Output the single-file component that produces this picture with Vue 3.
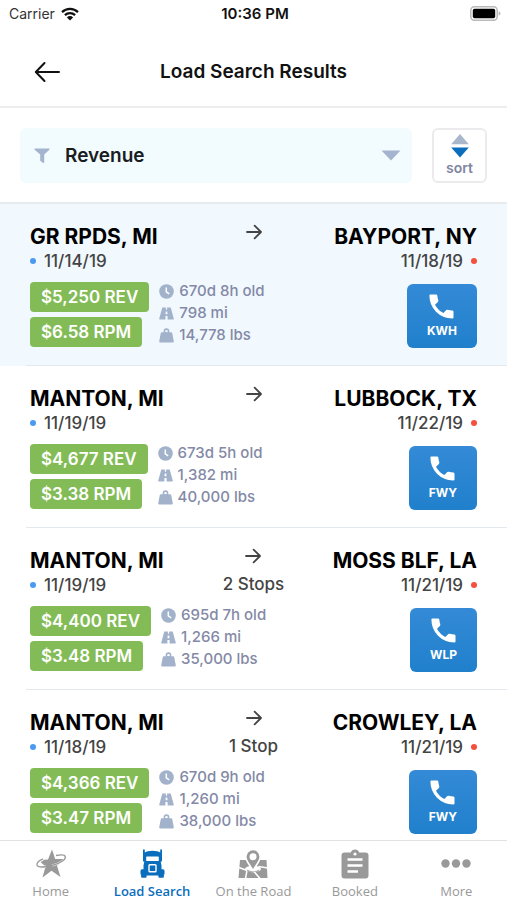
<script setup>
import { ref } from 'vue'

const sortKey = ref('Revenue')
const activeTab = ref('Load Search')

const loads = [
  { from: 'GR RPDS, MI', to: 'BAYPORT, NY', start: '11/14/19', end: '11/18/19', stops: '', rev: '$5,250 REV', rpm: '$6.58 RPM', age: '670d 8h old', miles: '798 mi', weight: '14,778 lbs', agent: 'KWH', selected: true },
  { from: 'MANTON, MI', to: 'LUBBOCK, TX', start: '11/19/19', end: '11/22/19', stops: '', rev: '$4,677 REV', rpm: '$3.38 RPM', age: '673d 5h old', miles: '1,382 mi', weight: '40,000 lbs', agent: 'FWY' },
  { from: 'MANTON, MI', to: 'MOSS BLF, LA', start: '11/19/19', end: '11/21/19', stops: '2 Stops', rev: '$4,400 REV', rpm: '$3.48 RPM', age: '695d 7h old', miles: '1,266 mi', weight: '35,000 lbs', agent: 'WLP' },
  { from: 'MANTON, MI', to: 'CROWLEY, LA', start: '11/18/19', end: '11/21/19', stops: '1 Stop', rev: '$4,366 REV', rpm: '$3.47 RPM', age: '670d 9h old', miles: '1,260 mi', weight: '38,000 lbs', agent: 'FWY' }
]

const tabs = ['Home', 'Load Search', 'On the Road', 'Booked', 'More']
</script>

<template>
  <div class="screen">
    <div class="status">
      <div class="carrier">
        <span>Carrier</span>
        <svg class="wifi" viewBox="0 0 18 14" aria-hidden="true">
          <path d="M1 5.2a11.5 11.5 0 0 1 16 0M3.9 8.2a7.4 7.4 0 0 1 10.2 0" fill="none" stroke="#111" stroke-width="2.3" />
          <path d="M9 13.6l-3.1-3.2a4.4 4.4 0 0 1 6.2 0z" fill="#111" />
        </svg>
      </div>
      <strong class="clock">10:36 PM</strong>
      <svg class="battery" viewBox="0 0 31 15" aria-hidden="true">
        <rect x="0.8" y="0.8" width="26.4" height="13.4" rx="3.6" fill="#fff" stroke="#b9b9b9" stroke-width="1.5" />
        <rect x="2.8" y="2.8" width="22.4" height="9.4" rx="1.8" fill="#000" />
        <path d="M28.6 5.2q1.9.8 1.9 2.3t-1.9 2.3z" fill="#b9b9b9" />
      </svg>
    </div>

    <header class="header">
      <button class="back" type="button" aria-label="Back">
        <svg viewBox="0 0 26 22" aria-hidden="true">
          <path d="M10.5 2L1.8 11l8.7 9M2 11h23" fill="none" stroke="#111" stroke-width="2" stroke-linecap="round" stroke-linejoin="round" />
        </svg>
      </button>
      <h1>Load Search Results</h1>
    </header>

    <div class="filters">
      <div class="picker">
        <select v-model="sortKey" aria-label="Sort loads by">
          <option>Revenue</option>
          <option>Rate per mile</option>
          <option>Distance</option>
        </select>
        <svg class="funnel" viewBox="0 0 16 16" aria-hidden="true">
          <path d="M.8.5h14.4q.8.5.2 1.300L10.200 6.500v7.900q-.5.9-1.300.4L6.200 12.800V6.500L.6 1.800Q.1 1 .8.5z" fill="#a5b4ce" />
        </svg>
        <svg class="caret" viewBox="0 0 20 11" aria-hidden="true"><path d="M.5.5h19L10 10.5z" fill="#a5b4ce" /></svg>
      </div>
      <button class="sort" type="button">
        <svg viewBox="0 0 18 24" aria-hidden="true">
          <path d="M9 0l8.800 10.200H.2z" fill="#a9b7cb" />
          <path d="M.2 13.400h17.600L9 23.600z" fill="#0a6ebd" />
        </svg>
        <span>sort</span>
      </button>
    </div>

    <main class="list">
      <article v-for="(load, i) in loads" :key="i" class="load" :class="{ selected: load.selected }">
        <div class="body">
          <div class="route">
            <div class="place">
              <h2>{{ load.from }}</h2>
              <p><i class="dot pickup"></i>{{ load.start }}</p>
            </div>
            <div class="via">
              <svg viewBox="0 0 16 16" aria-hidden="true">
                <path d="M1 8h13.600M8.600 1.600L15 8l-6.400 6.400" fill="none" stroke="#444" stroke-width="1.800" stroke-linecap="round" stroke-linejoin="round" />
              </svg>
              <span>{{ load.stops }}</span>
            </div>
            <div class="place end">
              <h2>{{ load.to }}</h2>
              <p>{{ load.end }}<i class="dot drop"></i></p>
            </div>
          </div>
          <div class="details">
            <div class="badges">
              <span class="badge">{{ load.rev }}</span>
              <span class="badge">{{ load.rpm }}</span>
            </div>
            <ul class="stats">
              <li>
                <svg viewBox="0 0 15 15" aria-hidden="true">
                  <circle cx="7.5" cy="7.5" r="7.3" fill="#a2b2cb" />
                  <path d="M7.3 3.4v4.4l2.9 2" fill="none" stroke="#fff" stroke-width="1.5" />
                </svg>{{ load.age }}
              </li>
              <li>
                <svg viewBox="0 0 15 15" aria-hidden="true">
                  <path d="M3.300 1.500h3.600v2.300h1.200V1.500h3.600l3.100 11.200q.1.800-.7.800H8.600V10H6.400v3.500H.9q-.8 0-.7-.8zM6.700 5.400l-.2 2.900h2l-.2-2.900z" fill="#a2b2cb" fill-rule="evenodd" />
                </svg>{{ load.miles }}
              </li>
              <li>
                <svg viewBox="0 0 15 15" aria-hidden="true">
                  <path d="M2.800 4.300h9.400q.8 0 1 .8l1.600 8.200q0 1.200-1 1.200H1.200q-1 0-1-1.200l1.600-8.200q.2-.8 1-.8z" fill="#a2b2cb" />
                  <circle cx="7.500" cy="3.200" r="2.100" fill="none" stroke="#a2b2cb" stroke-width="1.600" />
                </svg>{{ load.weight }}
              </li>
            </ul>
            <button class="call" type="button" :aria-label="'Call ' + load.agent">
              <svg viewBox="0 0 25 25" aria-hidden="true">
                <path d="M1.500.5h5.600q1 0 1.200 1 .2 2.500 1 4.800.2.900-.4 1.600L6 10.700q2.900 5.500 8.400 8.300l2.900-2.900q.6-.6 1.500-.3 2.300.8 4.700.8 1 .2 1 1.200v5.600q0 1.100-1.200 1.100Q13.500 24.300 7 17.800.5 11.300.4 1.600.4.500 1.500.5z" fill="#fff" />
              </svg>
              <span>{{ load.agent }}</span>
            </button>
          </div>
        </div>
      </article>
    </main>

    <nav class="tabs">
      <a v-for="tab in tabs" :key="tab" href="#" :class="{ active: tab === activeTab }" @click.prevent="activeTab = tab">
        <svg v-if="tab === 'Home'" viewBox="0 0 30 30" aria-hidden="true">
          <path d="M16 .5l3.200 9.500H28l-7 6.700L24.500 28 15.500 21.800 6.500 28.500 9.500 17.500 2.500 11.200l9.500-.7z" fill="currentColor" />
          <path d="M20 6.500c5-1 8.900-.6 9.300 1.300.5 2.900-5.300 6.700-13.300 8.700" fill="none" stroke="#fff" stroke-width="2" />
          <path d="M10 17.800c-5 .7-8.600.3-9-1.500-.4-1.900 2-4.200 6-6" fill="none" stroke="#fff" stroke-width="2.400" />
          <path d="M20 6.500c5-1 8.900-.6 9.300 1.300.5 2.900-5.300 6.700-13.300 8.700-7.500 1.900-14.300 2.300-15-.7-.4-1.900 2-4.200 6-6" fill="none" stroke="currentColor" stroke-width="1.300" />
        </svg>
        <svg v-else-if="tab === 'Load Search'" viewBox="0 0 30 30" aria-hidden="true">
          <path d="M6 .5h1.800v3Q10 1.800 15.500 1.800t7.700 1.700v-3H25v12h-1.300l.8 4v3.700h1.500q1.500 0 1.500 1.500v3.800h-.6v2.200q0 1-1 1h-3.500q-1 0-1-1v-1.200H9.600v1.200q0 1-1 1H5.100q-1 0-1-1v-2.200h-.6v-3.800q0-1.500 1.500-1.500h1.500v-3.700l.8-4H6z" fill="currentColor" />
          <rect x="9.200" y="7.500" width="12.600" height="4.500" rx=".6" fill="#fff" />
          <rect x="12" y="15.700" width="7" height="7" rx=".8" fill="none" stroke="#fff" stroke-width="1.400" />
        </svg>
        <svg v-else-if="tab === 'On the Road'" viewBox="0 0 30 30" aria-hidden="true">
          <path d="M2 11h26.500l1 18H.5z" fill="currentColor" />
          <path d="M1 18.500l8 3-1.500 8M16 22.500l6 7M20.500 17.500l9.500 1.500" fill="none" stroke="#fff" stroke-width="1.500" />
          <ellipse cx="15" cy="20" rx="8" ry="3.200" fill="#fff" />
          <path d="M15 .5a7.200 7.200 0 0 1 7.200 7.200c0 4.300-3.700 7.600-7.200 14-3.500-6.400-7.200-9.700-7.200-14A7.200 7.200 0 0 1 15 .5z" fill="currentColor" stroke="#fff" stroke-width="1.600" />
          <path d="M8.500 20.500q6.500 3.500 13 0l-1.500 2.200H10z" fill="currentColor" />
          <circle cx="15" cy="7.700" r="3.500" fill="#fff" />
        </svg>
        <svg v-else-if="tab === 'Booked'" viewBox="0 0 30 30" aria-hidden="true">
          <path d="M4.500 3.500h6.300a4.400 4.400 0 0 1 8.400 0h6.300q3 0 3 3v20q0 3-3 3h-21q-3 0-3-3v-20q0-3 3-3z" fill="currentColor" />
          <circle cx="15" cy="5" r="1.600" fill="#fff" />
          <path d="M7.500 10.500h15M7.500 16.500h15M7.500 22.500h10.500" stroke="#fff" stroke-width="2.600" />
        </svg>
        <svg v-else viewBox="0 0 30 30" aria-hidden="true">
          <g fill="currentColor"><circle cx="4.500" cy="14.500" r="4.200" /><circle cx="15" cy="14.500" r="4.200" /><circle cx="25.500" cy="14.500" r="4.200" /></g>
        </svg>
        <span>{{ tab }}</span>
      </a>
    </nav>
  </div>
</template>

<style>
body {
  margin: 0;
  background: #fff;
}
</style>

<style scoped>
.screen {
  display: flex;
  flex-direction: column;
  height: 100vh;
  overflow: hidden;
  font-family: Inter, "Liberation Sans", sans-serif;
  color: #111;
}
h1, h2, p, ul {
  margin: 0;
  padding: 0;
}
button {
  font-family: inherit;
  padding: 0;
  cursor: pointer;
}
svg {
  display: block;
  flex: none;
}
.status {
  display: grid;
  grid-template-columns: 1fr auto 1fr;
  align-items: center;
  height: 27px;
  padding: 0 6px 0 9px;
  font-size: 14px;
}
.carrier {
  display: flex;
  align-items: center;
  gap: 6px;
  color: #333;
}
.wifi {
  width: 18px;
  height: 14px;
}
.clock {
  font-size: 15px;
  font-weight: 600;
}
.battery {
  width: 31px;
  height: 15px;
  justify-self: end;
}
.header {
  display: grid;
  grid-template-columns: 1fr auto 1fr;
  align-items: center;
  height: 68px;
  padding: 11px 30px 0;
  border-bottom: 2px solid #ededf0;
}
.header h1 {
  font-size: 19px;
  line-height: 24px;
  font-weight: 600;
}
.back {
  justify-self: start;
  padding: 0 4px;
  border: 0;
  background: none;
}
.back svg {
  width: 26px;
  height: 22px;
}
.filters {
  display: flex;
  gap: 20px;
  padding: 20px 20px 19px;
  border-bottom: 2px solid #e8ebee;
}
.picker {
  flex: 1;
  display: grid;
  grid-template-columns: 16px 1fr 20px;
  align-items: center;
  padding: 0 11px 0 14px;
  height: 55px;
  border-radius: 6px;
  background: #f2fbfe;
}
.picker select {
  grid-area: 1 / 1 / 2 / 4;
  height: 55px;
  padding: 0 0 0 31px;
  border: 0;
  background: transparent;
  appearance: none;
  font: 600 19px Inter, "Liberation Sans", sans-serif;
  color: #1a1d1f;
}
.funnel, .caret {
  grid-row: 1;
  pointer-events: none;
}
.funnel {
  grid-column: 1;
  width: 16px;
  height: 16px;
}
.caret {
  grid-column: 3;
  width: 20px;
  height: 11px;
}
.sort {
  box-sizing: border-box;
  display: flex;
  flex-direction: column;
  align-items: center;
  gap: 1px;
  width: 55px;
  height: 55px;
  padding-top: 4px;
  border: 2px solid #ebebed;
  border-radius: 6px;
  background: #fff;
  color: #8085a0;
  font-size: 14px;
  line-height: 18px;
  font-weight: 600;
}
.sort svg {
  width: 18px;
  height: 24px;
}
.list {
  flex: 1;
  min-height: 0;
  overflow: hidden;
}
.load {
  padding-left: 26px;
}
.selected {
  background: #f1f8fe;
}
.body {
  padding: 20px 30px 17px 4px;
  border-bottom: 1px solid #e3e9ec;
}
.route {
  display: grid;
  grid-template-columns: 1fr auto 1fr;
}
.place h2 {
  font-size: 21px;
  line-height: 26px;
  font-weight: 700;
  color: #000;
  white-space: nowrap;
}
.place p {
  display: flex;
  align-items: center;
  gap: 8px;
  font-size: 17px;
  line-height: 22px;
  font-weight: 500;
  color: #444;
}
.end {
  display: flex;
  flex-direction: column;
  align-items: flex-end;
}
.dot {
  width: 6px;
  height: 6px;
  border-radius: 50%;
}
.pickup {
  background: #4a9af0;
}
.drop {
  background: #f5503d;
}
.via {
  display: flex;
  flex-direction: column;
  align-items: center;
  gap: 9px;
  font-size: 17px;
  line-height: 22px;
  font-weight: 500;
  color: #444;
}
.via svg {
  width: 16px;
  height: 16px;
}
.details {
  display: flex;
  align-items: flex-start;
  margin-top: 8px;
}
.badges {
  display: flex;
  flex-direction: column;
  align-items: flex-start;
  gap: 5px;
  margin-top: 2px;
}
.badge {
  padding: 0 11px;
  border-radius: 4px;
  background: #83bc56;
  color: #fff;
  font-size: 17px;
  line-height: 30px;
  font-weight: 600;
  white-space: nowrap;
}
.stats {
  flex: 1;
  margin-left: 10px;
  list-style: none;
  font-size: 15px;
  line-height: 22px;
  font-weight: 500;
  color: #8389a6;
}
.stats li {
  display: flex;
  align-items: center;
  gap: 5px;
}
.stats svg {
  width: 15px;
  height: 15px;
}
.call {
  display: flex;
  flex-direction: column;
  align-items: center;
  gap: 4px;
  margin-top: 4px;
  padding: 10px 20px;
  border: 0;
  border-radius: 6px;
  background: linear-gradient(#348ad6, #2080cc);
  color: #fff;
  font-size: 12px;
  line-height: 15px;
  font-weight: 700;
}
.call svg {
  width: 25px;
  height: 25px;
}
.tabs {
  display: grid;
  grid-template-columns: repeat(5, 1fr);
  height: 59px;
  border-top: 1px solid #e2e2e2;
  background: #fff;
}
.tabs a {
  display: flex;
  flex-direction: column;
  align-items: center;
  gap: 3px;
  padding-top: 8px;
  color: #999;
  text-decoration: none;
  font-family: "Open Sans", "Noto Sans", sans-serif;
  font-size: 13px;
  line-height: 18px;
  white-space: nowrap;
}
.tabs svg {
  width: 30px;
  height: 30px;
}
.tabs .active {
  color: #0a6ebd;
  font-weight: 600;
}
</style>
